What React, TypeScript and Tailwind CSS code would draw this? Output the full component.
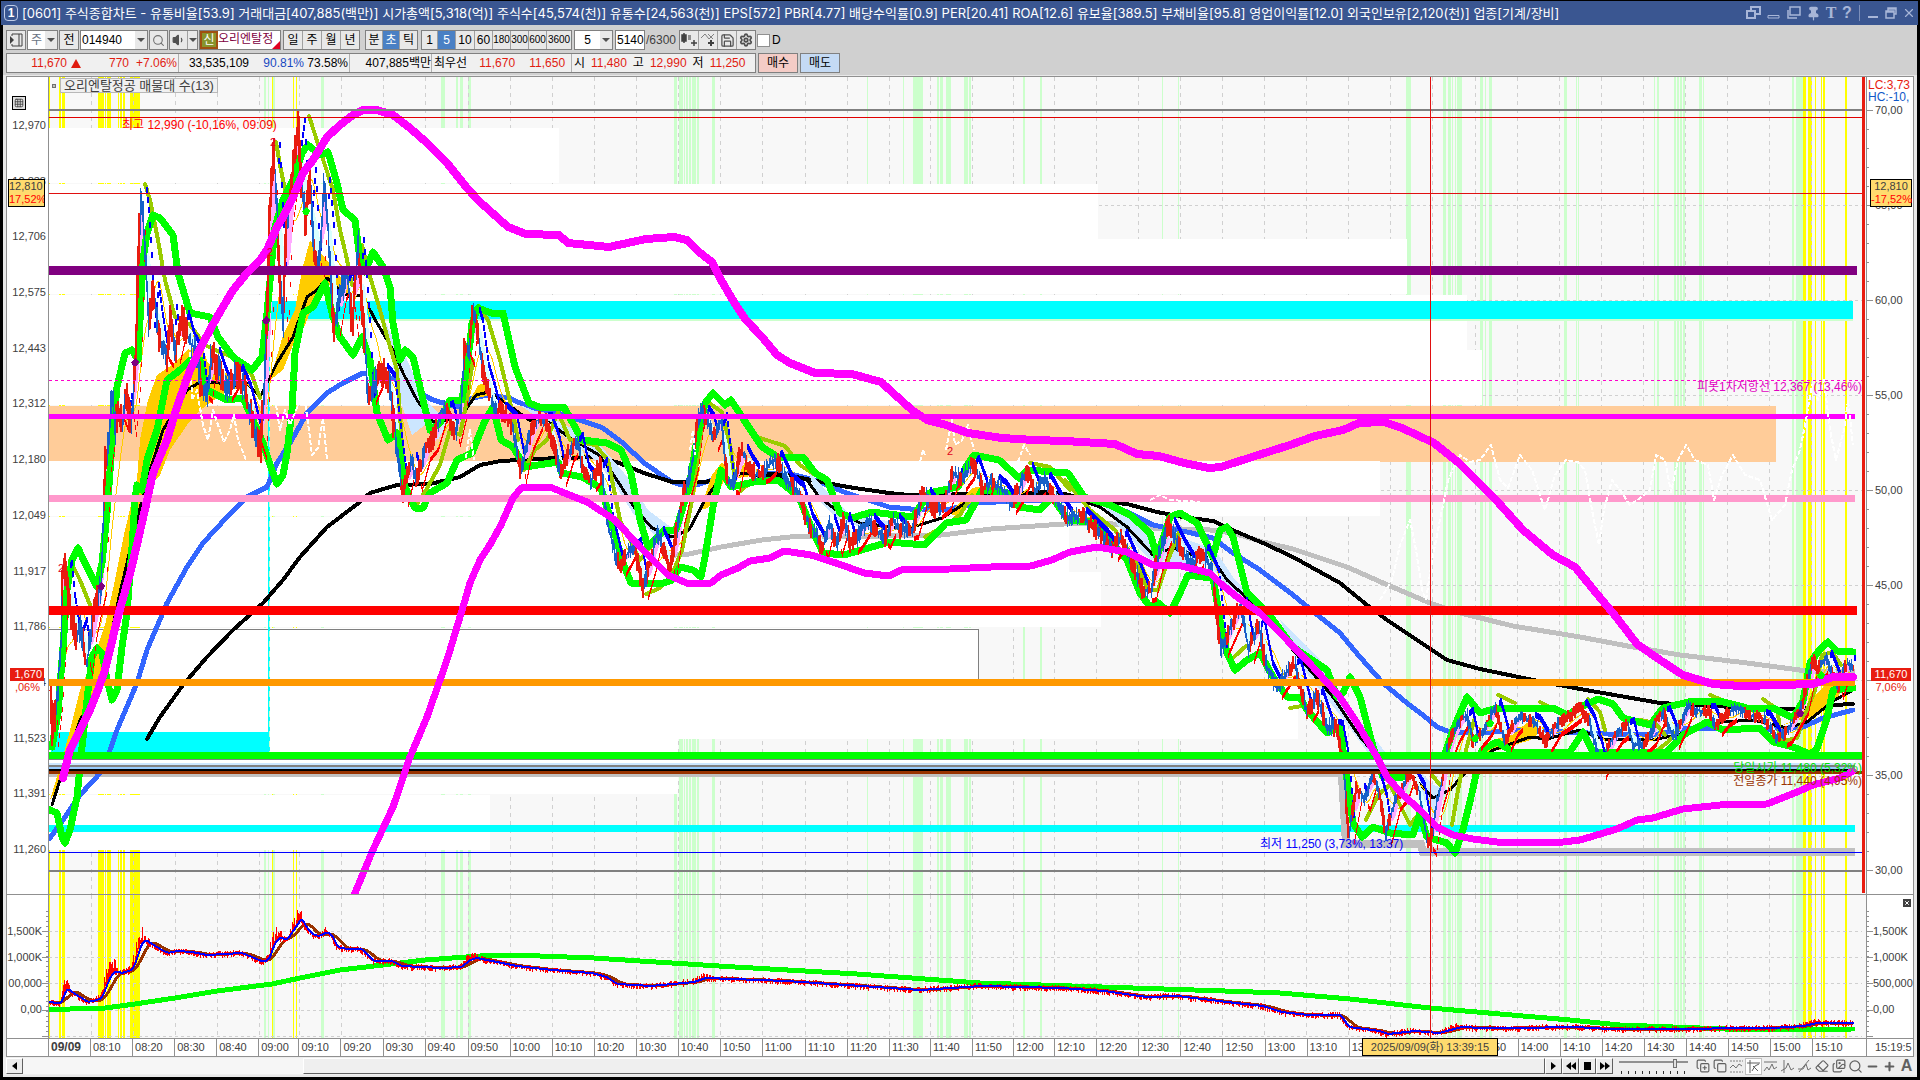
import type { ReactNode } from "react";
import {
  Search, Volume1, Save, Settings, Pin, X, Minus, Plus,
  Copy, CopyPlus, Images, Eraser, Grid3x3,
} from "lucide-react";

type Pt = [number, number];

const TITLE =
  "[0601] 주식종합차트 - 유통비율[53.9] 거래대금[407,885(백만)] 시가총액[5,318(억)] 주식수[45,574(천)] 유통수[24,563(천)] EPS[572] PBR[4.77] 배당수익률[0.9] PER[20.41] ROA[12.6] 유보율[389.5] 부채비율[95.8] 영업이익률[12.0] 외국인보유[2,120(천)] 업종[기계/장비]";

const PRICE_LABELS = ["12,970", "12,838", "12,706", "12,575", "12,443", "12,312", "12,180", "12,049", "11,917", "11,786", "11,654", "11,523", "11,391", "11,260"];
const SCALE_LABELS = ["70,00", "65,00", "60,00", "55,00", "50,00", "45,00", "40,00", "35,00", "30,00"];

// x of every vertical grid line, the last one is the right edge of the plot
const TICKS = [49, 91, 133, 175, 217, 259, 299, 341, 383, 425, 468, 510, 552, 594, 636, 678, 720, 762, 805, 847, 889, 930, 972, 1013, 1054, 1096, 1138, 1180, 1222, 1264, 1306, 1348, 1390, 1432, 1475, 1517, 1559, 1601, 1643, 1685, 1727, 1769, 1811, 1866];

const YELLOW: Pt[] = [[49, 1], [59, 2], [62, 3], [98, 6], [105, 1], [107, 4], [118, 1], [120, 2], [123, 2], [130, 10], [272, 1], [293, 1], [296, 1], [1803, 3], [1808, 4], [1815, 1], [1821, 1], [1823, 2], [1845, 2]];
const GREEN: Pt[] = [[264, 2], [268, 1], [273, 2], [321, 3], [441, 4], [456, 2], [460, 3], [468, 3], [674, 3], [679, 4], [684, 1], [686, 2], [689, 2], [692, 4], [697, 2], [712, 3], [867, 1], [903, 1], [913, 10], [937, 2], [940, 3], [946, 5], [964, 4], [969, 2], [1023, 2], [1040, 2], [1162, 1], [1178, 1], [1406, 5], [1443, 3], [1448, 3], [1452, 1], [1455, 1], [1457, 5], [1480, 3], [1485, 1], [1489, 3], [1564, 3], [1576, 1], [1578, 1], [1654, 1], [1657, 2], [1674, 2], [1677, 2], [1680, 2], [1683, 2], [1699, 3], [1703, 1], [1792, 2], [1796, 7]];

// right edge of each volume bar, top to bottom
const PROFILE = [559, 1098, 1407, 1467, 1482, 1776, 1380, 1069, 1101, 978, 1298, 678, 490];

const UPPER = "63,778 70,750 80,730 90,710 98,690 105,670 110,650 117,620 124,595 131,570 138,540 146,505 153,473 167,440 177,407 190,370 203,343 217,317 233,290 247,273 260,260 267,250 277,227 283,217 293,197 303,173 313,160 327,137 340,125 353,115 363,110 377,110 393,115 410,128 427,143 447,163 467,188 480,202 508,227 526,234 559,235 568,243 609,247 646,239 674,237 687,240 699,252 712,262 721,280 734,302 746,320 762,337 777,355 790,363 815,373 852,374 881,382 893,393 912,410 927,420 946,425 968,433 1002,438 1034,440 1065,441 1115,444 1137,454 1159,456 1184,463 1209,468 1221,467 1252,457 1290,445 1315,436 1343,430 1359,423 1384,422 1402,428 1434,443 1459,463 1480,484 1496,500 1523,530 1553,555 1575,567 1597,594 1617,618 1637,644 1660,660 1683,675 1713,684 1740,686 1780,685 1813,684 1833,677 1853,677";
const LOWER = "355,893 372,852 393,807 410,757 427,717 447,660 463,607 470,583 480,560 491,543 501,525 513,498 521,488 550,487 562,492 587,502 615,520 640,547 668,575 689,584 711,583 721,575 738,568 750,561 770,558 784,551 811,555 836,563 864,573 889,576 901,570 950,569 991,567 1031,566 1052,560 1070,552 1097,547 1127,552 1153,565 1177,565 1210,573 1220,583 1237,597 1260,613 1287,640 1313,667 1340,697 1357,723 1377,757 1387,777 1403,795 1420,810 1437,827 1453,835 1473,839 1497,842 1563,842 1580,840 1617,829 1637,820 1653,818 1683,809 1720,805 1767,804 1797,792 1813,785 1840,778 1853,771";
const SILVER = "664,556 689,554 721,547 762,540 799,536 835,537 942,535 991,529 1064,524 1103,523 1153,528 1210,530 1233,533 1263,542 1293,549 1347,567 1390,586 1430,603 1460,613 1513,626 1580,637 1633,647 1680,655 1747,663 1807,671 1853,671";
const BLACK_SLOW = "147,739 160,717 183,685 207,657 233,630 263,603 283,580 300,557 327,527 360,502 370,493 397,485 430,484 460,477 480,465 501,461 558,458 599,457 619,463 644,473 672,482 705,482 729,477 754,473 787,475 811,480 848,487 889,493 909,495 1023,493 1060,493 1090,500 1127,504 1157,512 1183,517 1213,521 1237,532 1263,543 1293,557 1340,583 1367,605 1387,620 1417,640 1447,660 1480,669 1533,680 1580,689 1620,696 1660,703 1713,706 1780,709 1813,708 1833,705 1853,704";
const BLUE_SLOW = "50,838 63,820 80,795 103,770 117,730 137,683 147,650 167,603 187,567 203,543 227,517 247,497 267,487 277,463 290,443 307,413 327,393 343,383 363,373 380,378 393,378 413,390 433,400 450,405 460,407 472,398 489,395 509,398 529,407 554,412 574,418 603,428 623,443 644,463 672,482 689,487 713,480 746,473 787,473 815,480 844,492 889,507 921,510 950,509 978,503 1031,500 1100,500 1127,512 1153,525 1187,532 1213,538 1233,553 1260,570 1293,595 1320,617 1340,633 1360,657 1383,683 1407,703 1423,715 1437,727 1450,732 1493,732 1530,730 1607,734 1653,735 1687,728 1740,728 1773,730 1803,727 1823,718 1853,710";
const BLACK_FAST = "52,805 60,780 80,720 100,687 110,640 120,593 137,520 147,480 163,430 187,390 200,382 217,382 227,387 247,383 260,397 277,363 293,337 307,297 317,290 327,278 340,290 350,297 362,295 377,323 393,350 403,373 417,400 433,422 460,418 476,395 489,392 509,405 529,420 550,423 570,438 599,455 615,477 636,510 652,528 672,537 689,530 705,500 721,477 746,473 762,477 787,477 807,480 819,497 840,513 860,523 893,527 909,528 942,518 978,495 1052,491 1100,507 1127,527 1153,555 1173,548 1193,555 1213,559 1227,580 1260,610 1293,650 1333,697 1360,737 1380,760 1393,778 1413,777 1433,798 1450,790 1465,773 1480,760 1493,750 1530,737 1547,739 1580,730 1603,739 1653,740 1680,734 1707,723 1753,720 1787,728 1807,722 1833,701 1853,690";
const GREEN_UP = "52,747 58,713 63,647 67,590 72,560 78,548 85,563 97,587 102,563 107,513 112,443 117,387 125,353 132,350 138,360 143,260 147,233 153,215 160,218 173,235 178,273 190,313 210,317 218,337 233,357 252,370 262,357 267,313 275,227 283,200 293,180 302,153 308,145 320,155 328,152 337,183 343,210 355,220 360,260 365,272 373,252 383,267 390,287 393,323 400,360 405,350 413,357 420,387 430,430 440,423 450,400 462,400 470,343 472,323 478,308 491,313 503,313 515,367 529,403 542,408 564,407 582,440 607,443 621,450 631,473 640,520 648,547 664,530 676,530 689,487 697,440 705,403 713,393 725,405 731,400 746,423 762,447 778,457 803,457 815,473 827,480 840,513 852,518 872,512 913,517 929,493 958,487 966,467 974,455 999,460 1019,478 1027,470 1068,473 1084,497 1110,505 1130,515 1150,533 1157,557 1170,517 1180,513 1197,523 1213,557 1220,530 1227,527 1233,537 1247,593 1268,613 1293,647 1327,670 1337,697 1343,693 1350,677 1360,697 1372,743 1383,777 1403,777 1413,760 1443,760 1453,730 1467,697 1480,713 1497,708 1553,708 1567,715 1583,706 1598,699 1613,704 1623,718 1650,725 1663,708 1680,704 1693,701 1720,701 1747,708 1773,708 1793,718 1803,701 1810,663 1820,649 1828,642 1837,651 1853,652";
const GREEN_DOWN = "50,810 57,813 62,837 65,843 70,830 77,797 82,747 87,700 92,657 97,648 102,653 107,680 112,700 117,690 122,647 127,613 132,547 135,500 137,485 142,490 147,460 157,430 167,380 180,370 190,360 200,360 207,390 227,400 243,398 253,420 263,443 273,473 277,484 283,475 287,453 292,410 295,353 303,313 313,307 325,283 333,317 340,337 353,355 362,337 370,360 377,413 388,440 397,433 405,487 415,508 423,508 430,493 447,483 457,460 472,453 484,423 493,407 501,440 513,447 525,467 558,462 562,473 582,477 601,488 611,520 623,563 631,583 664,583 672,580 680,567 693,570 701,577 705,557 713,507 721,470 731,487 754,482 778,480 799,497 811,527 823,553 844,555 872,547 889,542 925,545 946,523 966,520 982,490 1007,493 1019,507 1040,510 1052,497 1068,520 1090,522 1110,540 1127,560 1140,593 1150,607 1157,602 1170,613 1180,593 1188,575 1203,577 1213,577 1220,620 1227,653 1235,670 1247,660 1260,653 1273,677 1287,697 1300,697 1307,710 1327,733 1340,727 1347,780 1353,823 1362,837 1373,827 1390,833 1413,835 1420,813 1427,837 1447,843 1455,853 1463,830 1472,793 1477,770 1482,750 1497,742 1513,752 1570,752 1583,732 1593,752 1667,752 1683,735 1707,722 1723,730 1760,728 1773,742 1793,747 1810,754 1817,749 1827,718 1833,690 1853,688";

const OLIVE = [
  "70,560 80,580 90,605 93,615",
  "145,184 150,200 158,240 165,280 175,317 190,325 205,345 215,350 230,356 240,362 252,375 260,398",
  "276,142 280,165 285,190",
  "309,116 320,150 333,190 340,230 346,255 352,285",
  "362,245 368,270 380,310 388,340 397,370 401,430 404,480",
  "417,504 426,490 440,465 450,430 460,435 466,405 473,360",
  "479,306 488,320 500,360 512,410 518,440",
  "524,470 535,450 547,440 558,412 570,440 595,445 608,460 620,520 640,560 652,545",
  "646,594 660,588 672,575 682,550 692,500 700,440 706,401 722,412 730,445 735,480",
  "760,438 785,446 800,465 815,475",
  "738,493 750,483 765,478",
  "925,537 946,525 960,515 972,495",
  "1030,463 1050,467 1070,490",
  "1065,480 1090,510 1115,530 1135,560 1148,590 1158,590 1168,560 1180,530",
  "1234,657 1246,646",
  "1290,708 1302,706",
  "1366,820 1378,795 1390,785 1410,825 1420,812",
  "1432,775 1440,785",
  "1452,825 1458,790 1466,750 1474,720",
  "1498,695 1515,703", "1540,702 1560,712", "1588,699 1600,712 1605,730",
  "1640,720 1655,723 1665,735", "1655,752 1668,742 1678,730",
  "1710,695 1722,700", "1763,699 1778,710 1780,742 1797,738 1805,715 1815,690 1822,655 1832,652 1841,665",
];

const YELLOW_CLOUDS = [
  "50,800 62,760 70,730 80,690 95,655 105,625 115,580 125,530 137,480 140,440 148,400 157,375 172,365 187,350 200,345 207,362 220,370 235,378 250,392 232,388 217,398 200,410 187,425 170,450 160,475 147,490 137,530 120,600 110,645 100,690 80,722 60,785",
  "270,380 283,335 295,310 302,270 310,240 325,258 345,283 358,297 340,292 327,283 315,300 305,325 293,345 283,370",
  "470,400 478,385 487,382 494,392 486,396 476,398",
  "700,510 712,475 722,462 735,480 745,462 764,474 725,480 708,508",
  "950,514 972,488 990,485 1000,494 978,496 956,516",
  "1485,752 1492,740 1512,735 1530,722 1545,728 1530,740 1500,750",
  "1780,726 1800,718 1815,695 1830,680 1848,684 1835,700 1812,716",
];
const BLUE_CLOUDS = [
  "375,300 393,338 405,355 415,378 430,405 448,422 438,440 425,425 412,435 400,400 392,360",
  "520,405 545,415 575,430 600,445 630,480 648,510 672,528 672,540 655,535 634,515 612,480 590,455 555,430",
  "808,470 830,495 850,515 895,522 870,530 838,520 818,500",
  "1100,500 1130,515 1155,545 1175,535 1215,550 1235,580 1262,605 1230,590 1210,565 1150,560 1120,528",
  "1280,620 1320,660 1350,710 1372,735 1395,765 1375,762 1340,715 1300,665",
  "1418,770 1434,785 1448,790 1434,812 1424,800",
];

const PRICE = "50,690 52,735 56,700 60,640 62,575 65,568 68,600 72,625 76,635 80,625 84,655 86,664 90,630 95,605 100,585 101,560 103,500 105,460 108,440 110,405 112,400 114,430 118,410 122,420 126,395 130,425 134,380 136,330 138,250 140,195 142,215 145,260 148,330 152,290 156,320 160,345 164,352 167,356 170,312 174,352 182,318 188,340 196,353 200,385 206,392 210,360 213,355 218,370 226,390 236,372 244,390 254,430 260,448 263,390 267,300 269,215 273,150 278,250 282,330 286,220 290,190 294,155 298,125 301,190 305,220 309,175 313,250 318,265 323,185 327,230 333,330 340,290 346,275 352,325 357,245 360,280 364,340 367,400 373,385 380,370 388,380 395,440 402,495 410,460 416,480 424,450 432,440 440,412 446,408 454,435 460,410 464,345 468,355 472,312 476,325 482,370 488,390 493,410 500,410 510,420 520,472 527,440 536,420 545,420 552,440 560,475 568,450 576,440 582,470 590,480 600,465 606,520 615,558 620,565 628,550 634,545 642,588 650,560 656,532 664,550 670,570 678,515 684,490 692,460 697,420 700,410 707,420 712,440 720,420 727,480 733,485 740,450 746,462 755,475 764,470 775,458 785,480 797,490 806,520 815,535 822,548 828,522 836,545 843,520 850,545 858,535 867,520 875,530 884,538 892,520 900,530 912,528 922,492 934,510 945,500 952,473 960,480 972,463 982,490 990,480 1000,488 1010,503 1018,490 1026,470 1034,490 1044,480 1055,500 1067,518 1080,515 1100,535 1112,550 1120,537 1130,560 1143,592 1150,590 1156,562 1162,542 1168,525 1178,545 1190,565 1202,552 1212,575 1218,630 1220,650 1228,632 1240,605 1248,652 1257,622 1266,668 1276,688 1287,670 1294,665 1306,713 1316,695 1326,725 1336,728 1342,760 1348,832 1356,788 1364,800 1372,772 1380,800 1385,835 1394,800 1402,790 1408,772 1418,790 1426,838 1430,845 1436,800 1442,780 1446,750 1452,735 1460,720 1466,715 1472,742 1480,733 1486,725 1494,706 1504,742 1512,725 1520,716 1533,722 1545,742 1555,725 1567,717 1580,707 1588,722 1595,746 1600,768 1610,742 1617,732 1627,725 1632,746 1643,742 1650,735 1657,717 1663,713 1673,738 1680,722 1687,705 1693,711 1708,711 1715,726 1723,716 1735,708 1747,715 1763,718 1775,738 1785,734 1793,720 1802,704 1808,675 1813,660 1817,670 1825,658 1830,670 1837,688 1842,672 1847,662 1853,670";

// comparison series, visible only where it crosses something coloured
const GHOST = [
  "190,345 192,400 197,390 203,425 208,440 213,410 218,425 224,442 230,430 234,415 238,440 246,460",
  "276,405 280,430 285,410 290,425 296,410 304,395 309,430 312,455 318,448 323,418 327,460",
  "466,458 470,430 474,460", "690,450 693,430 695,455", "920,462 923,450 925,455",
  "946,450 952,420 955,445 962,440 968,425 974,450", "1018,462 1024,445 1030,455",
  "1150,500 1160,495 1170,500 1200,502",
  "1380,600 1392,580 1400,545 1410,520 1416,550 1422,590 1426,600 1432,560 1440,520 1448,480 1460,455 1470,462 1480,460 1491,445 1500,480 1508,488 1520,455 1532,470 1540,495 1545,510 1555,475 1566,460 1578,462 1585,470 1592,510 1599,545 1604,510 1612,480 1620,490 1630,505 1640,498 1650,490 1656,455 1665,460 1671,492 1678,460 1686,445 1695,460 1708,465 1714,500 1722,475 1733,455 1745,475 1760,480 1772,520 1785,505 1792,470 1800,450 1806,420 1812,385 1818,400 1824,380 1830,430 1836,460 1844,430 1848,400 1853,445",
];

const SUB_GREEN = "49,1010 70,1009 105,1008 135,1004 175,998 217,991 272,984 300,978 340,970 383,965 425,960 480,956 510,955 540,956 594,958 640,961 735,967 857,974 980,983 1102,987 1225,991 1280,993 1350,999 1430,1008 1500,1014 1570,1020 1620,1025 1700,1028 1750,1030 1853,1029";
const SUB = "49,1002 54,1003 60,1003 62,995 66,988 70,992 78,997 86,1002 95,1000 100,998 108,978 113,971 120,973 130,970 135,960 139,945 144,940 150,944 160,950 166,953 175,951 190,952 205,955 240,953 250,957 262,962 268,958 272,945 278,937 285,940 292,930 300,918 305,928 312,935 318,936 325,932 330,935 336,947 345,949 360,949 372,961 390,961 400,966 420,967 440,968 460,967 468,960 475,958 490,961 515,966 550,970 590,973 605,977 615,984 649,986 692,982 704,978 784,981 860,986 918,990 980,986 1060,988 1102,991 1145,997 1176,996 1225,1002 1261,1006 1280,1012 1306,1015 1339,1015 1347,1027 1378,1031 1386,1034 1413,1031 1437,1033 1460,1027 1480,1028 1513,1028 1574,1027 1607,1029 1688,1029 1733,1028 1770,1028 1802,1026 1815,1023 1853,1023";

const parse = (s: string): Pt[] => s.split(" ").map((p) => p.split(",").map(Number) as Pt);

function noise(i: number) {
  const v = Math.sin(i * 127.1) * 43758.5453;
  return v - Math.floor(v);
}

function sample(s: string, step: number): Pt[] {
  const pts = parse(s);
  const out: Pt[] = [];
  let k = 0;
  for (let x = pts[0][0]; x <= pts[pts.length - 1][0]; x += step) {
    while (k < pts.length - 2 && pts[k + 1][0] < x) k++;
    const [x0, y0] = pts[k];
    const [x1, y1] = pts[k + 1];
    out.push([x, y0 + ((y1 - y0) * (x - x0)) / (x1 - x0)]);
  }
  return out;
}

function smooth(pts: Pt[], n: number): Pt[] {
  return pts.map(([x], i) => {
    const part = pts.slice(Math.max(0, i - n), i + 1);
    return [x, part.reduce((a, p) => a + p[1], 0) / part.length];
  });
}

const join = (pts: Pt[]) => pts.map((p) => p.join(",")).join(" ");

const price = sample(PRICE, 1);
const lag = smooth(price, 10);
const lag2 = smooth(price, 22);

let redBars = "";
let blueBars = "";
let pinkFill = "";
let paleFill = "";
let blueTrail = "";
let redTrail = "";
price.forEach(([x, y], i) => {
  const amp = x < 400 ? 16 : x < 1340 ? 10 : 7;
  const prev = i > 0 ? price[i - 1][1] : y;
  const a = Math.min(prev, y) - noise(i) * amp;
  const b = Math.max(prev, y) + noise(i + 900) * amp;
  const bar = `M${x} ${a.toFixed(0)}V${b.toFixed(0)}`;
  if (noise(Math.floor(i / 3) + 300) > 0.5) redBars += bar;
  else blueBars += bar;
  const d = y - lag[i][1];
  if (d < -6) pinkFill += `M${x} ${y}V${lag[i][1]}`;
  if (d > 6) paleFill += `M${x} ${y}V${lag[i][1]}`;
  if (i > 5 && d > 3) blueTrail += `M${x} ${(price[i - 5][1] - 8).toFixed(0)}v6`;
  if (i > 5 && d < -3) redTrail += `M${x} ${(price[i - 5][1] + 5).toFixed(0)}v5`;
});

const sub = sample(SUB, 1);
const subSlow = smooth(sub, 14);
const subBars = sub
  .map(([x, y], i) => {
    const up = Math.max(0, subSlow[i][1] - y);
    const amp = 3 + Math.min(14, up);
    return `M${x} ${(y - noise(i) * amp).toFixed(0)}V${(y + noise(i + 70) * 4).toFixed(0)}`;
  })
  .join("");

function Line({ d, color, w, dash }: { d: string; color: string; w: number; dash?: string }) {
  return <polyline points={d} fill="none" stroke={color} strokeWidth={w} strokeDasharray={dash} strokeLinejoin="round" strokeLinecap={dash ? "butt" : "round"} />;
}

function Level({ y, color, w, x1 = 49, x2 = 1855 }: { y: number; color: string; w: number; x1?: number; x2?: number }) {
  return <rect x={x1} y={y} width={x2 - x1} height={w} fill={color} />;
}

function Backdrop({ top, height }: { top: number; height: number }) {
  return (
    <>
      <rect x="49" y={top} width="1817" height={height} fill="#f8f8f8" />
      {GREEN.map(([x, w]) => <rect key={x} x={x} y={top} width={w} height={height} fill="#ccffcc" />)}
      {YELLOW.map(([x, w]) => <rect key={x} x={x} y={top} width={w} height={height} fill="#ffff00" />)}
      {TICKS.slice(1, -1).map((x) => <path key={x} d={`M${x + 0.5} ${top}v${height}`} stroke="#d0d0d0" strokeDasharray="4 4" />)}
    </>
  );
}

function PriceChart() {
  return (
    <svg className="block size-full" viewBox="49 77 1817 817" preserveAspectRatio="none" shapeRendering="crispEdges" role="img" aria-label="가격 차트">
      <Backdrop top={77} height={817} />
      {[205, 300, 395, 490, 585, 680, 776].map((y) => <path key={y} d={`M49 ${y}.5H1862`} stroke="#d0d0d0" strokeDasharray="3 3" />)}
      {PROFILE.map((x, i) => {
        const y = Math.round(128 + i * 55.55);
        return <rect key={i} x="49" y={y} width={x - 49} height={i === 5 ? 56 : 55} fill={i === 5 ? "#ffcc99" : "#ffffff"} />;
      })}
      <path d="M49 629.5H978.5V684" stroke="#808080" fill="none" />

      <rect x="270" y="301" width="1583" height="18" fill="#00ffff" />
      <rect x="270" y="319" width="1583" height="2" fill="#ccffcc" />
      <rect x="51" y="732" width="218" height="31" fill="#00ffff" />
      <path d="M268.5 321V763" stroke="#00ffff" strokeWidth="2" />
      <path d="M269.5 321V770" stroke="#ccffcc" strokeDasharray="6 4" />
      <Level y={825} w={7} color="#00ffff" />
      <Level y={774} w={3} color="#c0c0c0" x2={1343} />
      <polyline points="1342,776 1346,844 1421,844 1423,852 1855,852" fill="none" stroke="#c0c0c0" strokeWidth="8" />

      <Line d={SILVER} color="#c0c0c0" w={5} />
      <Line d={BLUE_SLOW} color="#3366ff" w={5} />
      <Line d={BLACK_SLOW} color="#000000" w={4} />
      {BLUE_CLOUDS.map((p) => <polygon key={p} points={p} fill="#cce6ff" />)}
      {YELLOW_CLOUDS.map((p) => <polygon key={p} points={p} fill="#ffcc00" />)}
      <Line d={BLACK_FAST} color="#000000" w={3} />
      <Line d={join(lag2)} color="#ffcc00" w={1} />
      <path d={pinkFill} stroke="#ffaaff" />
      <path d={paleFill} stroke="#d8ffff" />
      {OLIVE.map((p) => <Line key={p} d={p} color="#99cc00" w={4} />)}
      <Line d={GREEN_UP} color="#00ff00" w={7} />
      <Line d={GREEN_DOWN} color="#00ff00" w={7} />
      <path d={blueTrail} stroke="#0000ff" strokeWidth="2" transform="translate(2 0)" />
      <path d={redTrail} stroke="#ff0000" strokeWidth="1" transform="translate(1 2)" />
      <path d={redBars} stroke="#e81c10" strokeWidth="2" />
      <path d={blueBars} stroke="#1860c8" strokeWidth="1" />

      <Level y={266} w={9} color="#800080" x2={1857} />
      <Level y={414} w={5} color="#ff00ff" />
      <Level y={495} w={7} color="#ff99cc" />
      <Level y={606} w={9} color="#ff0000" x2={1857} />
      <Level y={679} w={7} color="#ff9900" />
      <Level y={752} w={7} color="#00ff00" x2={1862} />
      <Level y={759} w={1} color="#808080" x2={1862} />
      <Level y={760} w={3} color="#ffffff" />
      <Level y={763} w={2} color="#cce6ff" />
      <Level y={765} w={2} color="#808080" />
      <Level y={767} w={2} color="#99ccff" />
      <Level y={769} w={2} color="#000000" />
      <Level y={771} w={3} color="#993300" x2={1862} />
      {GHOST.map((p) => <Line key={p} d={p} color="#ffffff" w={2} dash="5 2" />)}
      <Line d={UPPER} color="#ff00ff" w={8} />
      <Line d={LOWER} color="#ff00ff" w={7} />

      {[[135, 362], [266, 320], [101, 586], [1800, 713]].map(([x, y]) => (
        <path key={x} d={`M${x} ${y - 4}l4 4l-2 4h-4l-2-4z`} fill="#800080" />
      ))}
      {[[306, 211], [1475, 738], [1490, 723], [1821, 675]].map(([x, y]) => (
        <path key={x} d={`M${x} ${y - 4}l4 4l-2 4h-4l-2-4z`} fill="#00ff00" />
      ))}
      <Level y={109} w={2} color="#808080" x2={1862} />
      <Level y={870} w={2} color="#808080" x2={1862} />
      <Level y={117} w={1} color="#e00000" x2={1862} />
      <Level y={852} w={1} color="#0000ff" x2={1862} />
      <path d="M49 380.5H1862" stroke="#ff00cc" strokeDasharray="3 3" />
      <Level y={193} w={1} color="#e01010" x2={1862} />
      <rect x="1430" y="77" width="1" height="817" fill="#e01010" />
      <rect x="1862" y="77" width="3" height="816" fill="#e81c10" />
    </svg>
  );
}

function VolumeChart() {
  return (
    <svg className="block size-full" viewBox="49 895 1817 143" preserveAspectRatio="none" shapeRendering="crispEdges" role="img" aria-label="보조 지표">
      <Backdrop top={895} height={143} />
      {[931, 957, 983, 1010, 1036].map((y) => <path key={y} d={`M49 ${y}.5H1862`} stroke="#d0d0d0" strokeDasharray="3 3" />)}
      <Line d={SUB_GREEN} color="#00ff00" w={5} />
      <Line d={join(subSlow)} color="#993300" w={3} />
      <path d={subBars} stroke="#ff0000" />
      <Line d={join(smooth(sub, 4))} color="#0000ff" w={2} />
      <rect x="1430" y="895" width="1" height="143" fill="#e01010" />
    </svg>
  );
}

function Ticks({ side, kind }: { side: "left" | "right"; kind: "main" | "sub" }) {
  const marks: Pt[] = [];
  if (kind === "main") for (let i = 0; i <= 40; i++) marks.push([33 + i * 19, i % 5 === 0 ? 6 : 2]);
  else {
    for (let i = 0; i < 26; i++) if (16 + i * 5 < 140) marks.push([16 + i * 5, 2]);
    [36, 62, 88, 115, 141].forEach((y) => marks.push([y, 6]));
  }
  return (
    <svg className={side === "left" ? "absolute right-0 top-0 h-full w-2" : "absolute left-0 top-0 h-full w-2"} viewBox={kind === "main" ? "0 0 8 817" : "0 0 8 143"} preserveAspectRatio="none" shapeRendering="crispEdges" aria-hidden>
      {marks.map(([y, w], i) => <rect key={i} x={side === "left" ? 8 - w : 0} y={y} width={w} height="1" fill="#909090" />)}
    </svg>
  );
}

function Tool({ children, active, wide, label }: { children: ReactNode; active?: boolean; wide?: string; label?: string }) {
  return (
    <button type="button" aria-label={label} className={`flex h-full shrink-0 items-center justify-center overflow-hidden border-r border-[#a0a0a0] last:border-r-0 ${wide ?? "w-[19px]"} ${active ? "bg-[#4a80c4] text-white" : "bg-[#e8e8e8]"}`}>
      {children}
    </button>
  );
}

function Box({ children, className = "" }: { children: ReactNode; className?: string }) {
  return <div className={`flex h-5 shrink-0 items-center border border-[#808080] bg-[#e8e8e8] ${className}`}>{children}</div>;
}

function Caret() {
  return <svg className="h-1 w-2" viewBox="0 0 8 4" aria-hidden><path d="M0 0h8l-4 4z" fill="#505050" /></svg>;
}

function Toolbar() {
  return (
    <div className="flex h-5 items-center gap-px">
      <Box className="w-5 justify-center"><button type="button" aria-label="패널 열기"><svg width="14" height="14" viewBox="0 0 14 14" aria-hidden><path d="M3 3V1h10v12H3v-2M10 1v12" fill="none" stroke="#404040" /><path d="M1 3l4 4-4 4z" fill="#404040" /></svg></button></Box>
      <Box className="w-[31px] bg-white">
        <span className="flex-1 text-center text-gray-500">주</span>
        <button type="button" aria-label="구분 선택" className="flex h-full w-3 items-center justify-center bg-[#e8e8e8]"><Caret /></button>
      </Box>
      <Box><Tool wide="w-[18px]">전</Tool></Box>
      <Box className="w-[68px] bg-white">
        <input aria-label="종목코드" defaultValue="014940" className="w-0 flex-1 bg-transparent pl-px outline-none" />
        <button type="button" aria-label="종목 목록" className="flex h-full w-3 items-center justify-center bg-[#e8e8e8]"><Caret /></button>
      </Box>
      <Box><Tool wide="w-[17px]" label="검색"><Search size={13} color="#707070" /></Tool></Box>
      <Box><Tool wide="w-[18px]" label="소리"><Volume1 size={14} fill="#505050" color="#505050" /></Tool><Tool wide="w-[9px]" label="소리 설정"><Caret /></Tool></Box>
      <div className="flex h-5 w-[82px] shrink-0 items-center border border-[#808080] bg-white">
        <span className="flex h-full w-[18px] items-center justify-center border-2 border-[#a05010] bg-[#88942c] text-white">신</span>
        <span className="relative h-full flex-1 overflow-hidden whitespace-nowrap text-[#800040]">
          오리엔탈정
          <svg className="absolute bottom-0 right-0 size-2" viewBox="0 0 8 8" aria-hidden><path d="M8 0v8H0z" fill="#e00020" /></svg>
        </span>
      </div>
      <Box className="ml-px"><Tool>일</Tool><Tool>주</Tool><Tool>월</Tool><Tool wide="w-[18px]">년</Tool></Box>
      <Box className="ml-1"><Tool wide="w-[17px]">분</Tool><Tool wide="w-[17px]" active>초</Tool><Tool wide="w-[17px]">틱</Tool></Box>
      <Box className="ml-0.5 text-[10px]">
        <Tool wide="w-4"><span className="text-xs">1</span></Tool>
        <Tool wide="w-[18px]" active><span className="text-xs">5</span></Tool>
        <Tool><span className="text-xs">10</span></Tool>
        <Tool wide="w-[18px]"><span className="text-xs">60</span></Tool>
        <Tool wide="w-[18px]">180</Tool><Tool wide="w-[18px]">300</Tool><Tool wide="w-[18px]">600</Tool><Tool wide="w-6">3600</Tool>
      </Box>
      <Box className="ml-px w-[39px] bg-white">
        <span className="flex-1 text-center">5</span>
        <button type="button" aria-label="주기 선택" className="flex h-full w-3 items-center justify-center bg-[#e8e8e8]"><Caret /></button>
      </Box>
      <input aria-label="봉 개수" defaultValue="5140" className="ml-px h-5 w-[30px] border border-[#808080] bg-white pl-px outline-none" />
      <span className="w-8 text-[#404040]">/6300</span>
      <Box>
        <Tool label="차트 추가"><svg width="16" height="16" viewBox="0 0 16 16" aria-hidden><path d="M1 3h4v6H1zM3 1v10M10 11h6M13 8v6" stroke="#404040" fill="#404040" strokeWidth="1.5" /><path d="M7 3h3v5H7z" fill="#909090" /></svg></Tool>
        <Tool label="지표 추가"><svg width="16" height="16" viewBox="0 0 16 16" aria-hidden><path d="M1 6l4-4 4 5 5-5M8 2l5 5" stroke="#808080" fill="none" /><path d="M8 11h6M11 8v6" stroke="#404040" strokeWidth="2" /></svg></Tool>
        <Tool label="저장"><Save size={15} color="#505050" /></Tool>
        <Tool wide="w-[18px]" label="설정"><Settings size={14} color="#505050" strokeWidth={3} /></Tool>
      </Box>
      <label className="flex items-center gap-0.5"><input type="checkbox" className="size-[13px] appearance-none border border-[#909090] bg-white" />D</label>
    </div>
  );
}

function Quotes() {
  return (
    <div className="flex h-5 items-center gap-0.5">
      <div className="flex h-5 items-center border border-[#808080] bg-[#f0f0f0] text-right text-[#e01c10]">
        <div className="flex h-full w-[172px] items-center border-r border-[#b0b0b0]">
          <span className="w-[60px]">11,670</span>
          <svg className="ml-1 h-[9px] w-[10px]" viewBox="0 0 10 9" aria-hidden><path d="M5 0l5 9H0z" fill="#e01c10" /></svg>
          <span className="w-12">770</span>
          <span className="w-12">+7.06%</span>
        </div>
        <div className="flex h-full w-[171px] items-center border-r border-[#b0b0b0] text-black">
          <span className="w-[70px]">33,535,109</span>
          <span className="w-[55px] text-[#1848c0]">90.81%</span>
          <span className="w-11">73.58%</span>
        </div>
        <div className="flex h-full w-[82px] items-center justify-end border-r border-[#b0b0b0] text-black">407,885백만</div>
        <div className="flex h-full w-[140px] items-center border-r border-[#b0b0b0] pl-0.5">
          <span className="text-black">최우선</span>
          <span className="w-12">11,670</span>
          <span className="w-[50px]">11,650</span>
        </div>
        <div className="flex h-full w-[183px] items-center gap-1.5 pl-0.5">
          <span className="text-black">시</span><span>11,480</span>
          <span className="text-black">고</span><span>12,990</span>
          <span className="text-black">저</span><span>11,250</span>
        </div>
      </div>
      <button type="button" className="h-5 w-10 border border-[#808080] bg-[#f4ccc6]">매수</button>
      <button type="button" className="h-5 w-10 border border-[#808080] bg-[#c4daf4]">매도</button>
    </div>
  );
}

function TitleBar() {
  return (
    <header className="ml-px mr-0.5 flex h-[25px] shrink-0 items-center border-t border-black bg-[#3a5691] pl-[3px] pr-0.5 text-white">
      <span className="mr-1 flex h-4 w-[14px] items-center justify-center rounded-sm border border-[#c0cce8] font-bold">1</span>
      <h1 className="flex-1 overflow-hidden whitespace-nowrap font-['Inter','Noto_Sans_CJK_KR',sans-serif] text-[13px]">{TITLE}</h1>
      <div className="flex items-center gap-1 text-[#a8b6d8]">
        <button type="button" aria-label="창 분리"><svg width="16" height="14" viewBox="0 0 16 14" aria-hidden><path d="M5 6V1h9v7H9M1 5h8v7H1z" fill="none" stroke="currentColor" strokeWidth="2" /></svg></button>
        <button type="button" aria-label="접기"><svg width="16" height="14" viewBox="0 0 16 14" aria-hidden><path d="M2 9.5h11v2.5H2z" fill="none" stroke="currentColor" /></svg></button>
        <button type="button" aria-label="복사"><svg width="16" height="14" viewBox="0 0 16 14" aria-hidden><path d="M4 1h10v8H4zM2 4v8h9" fill="none" stroke="currentColor" strokeWidth="1.5" /></svg></button>
        <button type="button" aria-label="고정"><Pin size={15} fill="currentColor" /></button>
        <button type="button" className="w-3 text-center font-['Liberation_Serif',serif] text-base font-bold leading-none">T</button>
        <button type="button" className="w-3 text-center text-base font-bold leading-none">?</button>
        <span className="mx-0.5 h-4 w-px bg-[#7d8fba]" />
        <button type="button" aria-label="최소화"><svg width="14" height="14" viewBox="0 0 14 14" aria-hidden><path d="M2 10h10v2H2z" fill="currentColor" /></svg></button>
        <button type="button" aria-label="이전 크기"><svg width="14" height="14" viewBox="0 0 14 14" aria-hidden><path d="M4 5V2h8v6h-2M2 5h8v7H2zM4 3h8M2 6h8" fill="none" stroke="currentColor" strokeWidth="1.5" /></svg></button>
        <button type="button" aria-label="닫기"><X size={14} /></button>
      </div>
    </header>
  );
}

function ScrollBar() {
  const play = "flex h-4 w-[17px] items-center justify-center border border-b-[#606060] border-r-[#606060] border-l-white border-t-white bg-[#ececec]";
  const tool = "flex w-[17px] shrink-0 items-center justify-center";
  return (
    <footer className="flex h-[18px] shrink-0 items-center bg-[#eeeeee] pl-[3px] pr-0.5 text-[#606060]">
      <button type="button" aria-label="왼쪽으로" className={play}><svg width="5" height="8" viewBox="0 0 5 8" aria-hidden><path d="M5 0v8L0 4z" /></svg></button>
      <div className="flex h-4 flex-1 bg-[#f6f6f6] pl-[280px]">
        <div className="flex-1 border border-b-[#606060] border-r-[#606060] border-l-white border-t-white bg-[#efefef]" />
      </div>
      <button type="button" aria-label="재생" className={play}><svg width="5" height="8" viewBox="0 0 5 8" aria-hidden><path d="M0 0v8l5-4z" /></svg></button>
      <button type="button" aria-label="뒤로" className={play}><svg width="10" height="8" viewBox="0 0 10 8" aria-hidden><path d="M5 0v8L0 4zM10 0v8L5 4z" /></svg></button>
      <button type="button" aria-label="정지" className={play}><svg width="7" height="8" viewBox="0 0 7 8" aria-hidden><path d="M0 0h7v8H0z" /></svg></button>
      <button type="button" aria-label="앞으로" className={play}><svg width="10" height="8" viewBox="0 0 10 8" aria-hidden><path d="M0 0v8l5-4zM5 0v8l5-4z" /></svg></button>
      <div className="relative mx-1.5 h-4 w-[69px]">
        <svg className="size-full" viewBox="0 0 69 16" shapeRendering="crispEdges" aria-hidden>
          <path d="M0 4h69" stroke="#909090" strokeWidth="2" />
          {Array.from({ length: 10 }, (_, i) => <rect key={i} x={2 + i * 7} y="13" width="1" height="3" fill="#303030" />)}
          <path d="M54.5 1h3v8h-3z" fill="#e0e0e0" stroke="#707070" />
        </svg>
        <input type="range" aria-label="재생 속도" defaultValue="80" className="absolute inset-0 w-full opacity-0" />
      </div>
      <div className="flex">
        <button type="button" aria-label="확대 추가" className={tool}><CopyPlus size={14} /></button>
        <button type="button" aria-label="겹치기" className={tool}><Copy size={14} /></button>
        <button type="button" aria-label="영역" className={tool}><svg width="15" height="15" viewBox="0 0 15 15" aria-hidden><path d="M1 2h13M1 13h13" stroke="#808080" strokeDasharray="2 1" /><path d="M1 9l3-3 3 3 3-4 3 2" fill="none" stroke="#707070" /></svg></button>
        <button type="button" aria-label="기준선" className={`${tool} border border-[#c0c0c0] bg-white`}><svg width="15" height="15" viewBox="0 0 15 15" aria-hidden><path d="M1 4h13M4 1v13M6 12l3-5 4-2M7 7l5 5" fill="none" stroke="#606060" /></svg></button>
        <button type="button" aria-label="수평선" className={tool}><svg width="15" height="15" viewBox="0 0 15 15" aria-hidden><path d="M1 3h13M1 12l3-4 2 3 3-6 2 5 3-2" fill="none" stroke="#707070" /></svg></button>
        <button type="button" aria-label="수직선" className={tool}><svg width="15" height="15" viewBox="0 0 15 15" aria-hidden><path d="M4 1v13M1 12l5-3 2-5 3 7 3-2" fill="none" stroke="#707070" /></svg></button>
        <button type="button" aria-label="추세선" className={tool}><svg width="15" height="15" viewBox="0 0 15 15" aria-hidden><path d="M2 13L12 1M1 10h5l3-5 2 6 3-2" fill="none" stroke="#707070" /></svg></button>
        <button type="button" aria-label="모두 지우기" className={tool}><Eraser size={14} /></button>
        <button type="button" aria-label="그림" className={tool}><Images size={14} /></button>
        <button type="button" aria-label="돋보기" className={tool}><Search size={15} /></button>
        <button type="button" aria-label="축소" className={tool}><Minus size={13} strokeWidth={4} /></button>
        <button type="button" aria-label="확대" className={tool}><Plus size={13} strokeWidth={4} /></button>
        <button type="button" className={`${tool} text-base font-bold leading-none`}>A</button>
      </div>
    </footer>
  );
}

// the session break before 09:00 leaves no room for an 08:50 mark
function timeLabel(i: number) {
  if (i === 0) return "09/09";
  const m = 480 + (i < 5 ? i : i + 1) * 10;
  return `${String(Math.floor(m / 60)).padStart(2, "0")}:${String(m % 60).padStart(2, "0")}`;
}

export default function App() {
  return (
    <div className="flex h-screen min-h-[600px] flex-col overflow-hidden bg-black pb-[3px] font-['Liberation_Sans','Noto_Sans_CJK_KR',sans-serif] text-xs leading-4 text-black">
      <TitleBar />
      <div className="mx-[3px] flex min-h-0 flex-1 flex-col bg-[#e8e8e8]">
        <div className="flex h-[50px] shrink-0 flex-col gap-[3px] bg-[#d0d0d0] pl-[3px] pt-[5px]">
          <Toolbar />
          <Quotes />
        </div>
        <main className="mx-[3px] mt-px flex min-h-0 flex-1 flex-col border border-[#909090] bg-white text-[11px] text-[#404040]">
          <section className="flex min-h-0 flex-1">
            <div className="relative w-[42px] shrink-0 border-r border-[#909090]">
              <button type="button" aria-label="표 보기" className="absolute left-[5px] top-[19px] flex size-[14px] items-center justify-center border border-black bg-[#e0e0e0]"><Grid3x3 size={10} /></button>
              <div className="flex h-full flex-col justify-between pb-[37px] pr-0.5 pt-10 text-right">
                {PRICE_LABELS.map((p) => <span key={p}>{p}</span>)}
              </div>
              <div className="absolute left-px top-[102px] w-[37px] overflow-hidden whitespace-nowrap border border-black bg-[#ffdb6e] leading-[13px]">
                <div>12,810</div><div className="text-[#ff0000]">17,52%</div>
              </div>
              <div className="absolute left-[3px] top-[591px] w-[34px] text-right leading-[13px]">
                <div className="bg-[#e81c10] pr-0.5 text-white">1,670</div>
                <div className="bg-white pr-1 text-[#e81c10]">,06%</div>
              </div>
            </div>
            <div className="relative min-w-0 flex-1">
              <PriceChart />
              <div className="absolute left-[3px] top-px flex items-center gap-1">
                <span className="size-1 border border-[#707070] bg-[#c0c0c0]" />
                <span className="h-[15px] border border-[#b8b8b8] bg-[#f0f0f0] px-[3px] text-[13px] leading-[13px]">오리엔탈정공 매물대 수(13)</span>
              </div>
              <span className="absolute left-[73px] top-10 text-xs text-[#ff0000]">최고 12,990 (-10,16%, 09:09)</span>
              <span className="absolute left-[1211px] top-[759px] text-xs text-[#0000ff]">최저 11,250 (3,73%, 13:37)</span>
              <span className="absolute right-1 top-[302px] text-xs text-[#e000c0]">피봇1차저항선 12,367 (13,46%)</span>
              <span className="absolute right-1 top-[683px] text-xs text-[#00e000]">당일시가 11,480 (5,32%)</span>
              <span className="absolute right-1 top-[696px] text-xs text-[#993300]">전일종가 11,440 (4,95%)</span>
              <span className="absolute left-[221px] top-[57px] text-[#e00020]">2</span>
              <span className="absolute left-[9px] top-[483px] text-[#e00020]">2</span>
              <span className="absolute left-[218px] top-[167px] text-[#e00020]">2</span>
              <span className="absolute left-[898px] top-[366px] text-[#e00020]">2</span>
            </div>
            <div className="relative w-[47px] shrink-0 border-l border-[#909090]">
              <Ticks side="right" kind="main" />
              <div className="absolute left-px top-0.5 overflow-hidden whitespace-nowrap text-xs leading-3">
                <div className="text-[#e81c10]">LC:3,73</div><div className="text-[#1058c8]">HC:-10,</div>
              </div>
              <div className="flex h-full flex-col justify-between pb-4 pl-2 pt-[25px]">
                {SCALE_LABELS.map((p) => <span key={p}>{p}</span>)}
              </div>
              <div className="absolute left-[3px] top-[102px] w-[42px] whitespace-nowrap border border-black bg-[#ffdb6e] text-center leading-[13px]">
                <div>12,810</div><div className="text-[#ff0000]">-17,52%</div>
              </div>
              <div className="absolute left-1 top-[591px] w-10 text-center leading-[13px]">
                <div className="bg-[#e81c10] text-white">11,670</div>
                <div className="bg-white text-[#e81c10]">7,06%</div>
              </div>
            </div>
          </section>

          <section className="flex h-36 shrink-0 border-t border-[#909090]">
            <div className="relative w-[42px] shrink-0 border-r border-[#909090]">
              <Ticks side="left" kind="sub" />
              <div className="flex flex-col items-end gap-2.5 pr-1.5 pt-7">
                <span>1,500K</span><span>1,000K</span><span>00,000</span><span>0,00</span>
              </div>
            </div>
            <div className="min-w-0 flex-1"><VolumeChart /></div>
            <div className="relative w-[47px] shrink-0 border-l border-[#909090]">
              <Ticks side="right" kind="sub" />
              <button type="button" aria-label="지표 닫기" className="absolute right-0.5 top-1 flex size-2 items-center justify-center bg-[#404040] text-white"><X size={6} strokeWidth={4} /></button>
              <div className="flex flex-col gap-2.5 pl-1.5 pt-7">
                <span>1,500K</span><span>1,000K</span><span>500,000</span><span>0,00</span>
              </div>
            </div>
          </section>

          <section className="relative flex h-[18px] shrink-0 border-t border-[#909090]">
            <div className="w-[41px] shrink-0" />
            <div className="flex min-w-0 flex-1">
              {TICKS.slice(0, -1).map((x, i) => (
                <span key={x} className={`basis-0 overflow-hidden border-l border-[#909090] pl-0.5 ${i === 0 ? "text-xs font-bold" : ""}`} style={{ flexGrow: TICKS[i + 1] - x }}>{timeLabel(i)}</span>
              ))}
            </div>
            <div className="w-[47px] shrink-0 border-l border-[#909090] pl-2">15:19:5</div>
            <time className="absolute -top-px left-[1355px] h-[18px] w-[136px] overflow-hidden whitespace-nowrap border border-black bg-[#ffdb6e] text-center">2025/09/09(화) 13:39:15</time>
          </section>
        </main>
        <ScrollBar />
        <div className="h-0.5 shrink-0" />
      </div>
    </div>
  );
}
